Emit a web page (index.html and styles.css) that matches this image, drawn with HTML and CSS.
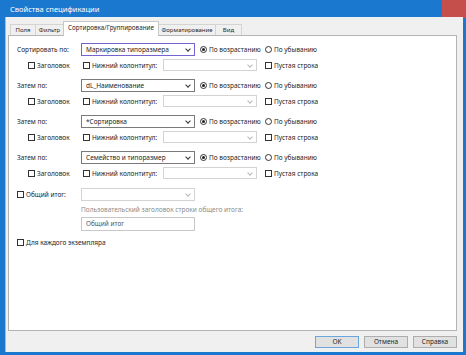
FILE: index.html
```html
<!DOCTYPE html>
<html lang="ru">
<head>
  <meta charset="UTF-8" />
  <title>Свойства спецификации</title>
  <link rel="stylesheet" href="styles.css">
</head>
<body>
  <div class="window">
    <div class="titlebar">
      <span class="title">Свойства спецификации</span>
      <span class="close"></span>
    </div>

    <div class="dialog">
      <div class="tabs">
        <div class="tab t-fields">Поля</div>
        <div class="tab t-filter">Фильтр</div>
        <div class="tab t-sort active">Сортировка/Группирование</div>
        <div class="tab t-format">Форматирование</div>
        <div class="tab t-view">Вид</div>
      </div>

      <div class="panel">
        <!-- уровень 1 -->
        <div class="group">
          <div class="row-main">
            <span class="label">Сортировать по:</span>
            <span class="combo focused">Маркировка типоразмера<i class="chev"></i></span>
            <span class="radio-item"><i class="radio on"></i>По возрастанию</span>
            <span class="radio-item"><i class="radio"></i>По убыванию</span>
          </div>
          <div class="row-sub">
            <span class="check-item head"><i class="check"></i>Заголовок</span>
            <span class="check-item foot"><i class="check"></i>Нижний колонтитул:</span>
            <span class="combo small disabled"><i class="chev"></i></span>
            <span class="check-item"><i class="check"></i>Пустая строка</span>
          </div>
        </div>

        <!-- уровень 2 -->
        <div class="group">
          <div class="row-main">
            <span class="label">Затем по:</span>
            <span class="combo">dL_Наименование<i class="chev"></i></span>
            <span class="radio-item"><i class="radio on"></i>По возрастанию</span>
            <span class="radio-item"><i class="radio"></i>По убыванию</span>
          </div>
          <div class="row-sub">
            <span class="check-item head"><i class="check"></i>Заголовок</span>
            <span class="check-item foot"><i class="check"></i>Нижний колонтитул:</span>
            <span class="combo small disabled"><i class="chev"></i></span>
            <span class="check-item"><i class="check"></i>Пустая строка</span>
          </div>
        </div>

        <!-- уровень 3 -->
        <div class="group">
          <div class="row-main">
            <span class="label">Затем по:</span>
            <span class="combo">*Сортировка<i class="chev"></i></span>
            <span class="radio-item"><i class="radio on"></i>По возрастанию</span>
            <span class="radio-item"><i class="radio"></i>По убыванию</span>
          </div>
          <div class="row-sub">
            <span class="check-item head"><i class="check"></i>Заголовок</span>
            <span class="check-item foot"><i class="check"></i>Нижний колонтитул:</span>
            <span class="combo small disabled"><i class="chev"></i></span>
            <span class="check-item"><i class="check"></i>Пустая строка</span>
          </div>
        </div>

        <!-- уровень 4 -->
        <div class="group">
          <div class="row-main">
            <span class="label">Затем по:</span>
            <span class="combo">Семейство и типоразмер<i class="chev"></i></span>
            <span class="radio-item"><i class="radio on"></i>По возрастанию</span>
            <span class="radio-item"><i class="radio"></i>По убыванию</span>
          </div>
          <div class="row-sub">
            <span class="check-item head"><i class="check"></i>Заголовок</span>
            <span class="check-item foot"><i class="check"></i>Нижний колонтитул:</span>
            <span class="combo small disabled"><i class="chev"></i></span>
            <span class="check-item"><i class="check"></i>Пустая строка</span>
          </div>
        </div>

        <!-- общий итог -->
        <div class="total">
          <div class="row-main">
            <span class="check-item label"><i class="check"></i>Общий итог:</span>
            <span class="combo disabled"><i class="chev"></i></span>
          </div>
          <div class="caption">Пользовательский заголовок строки общего итога:</div>
          <div class="textbox">Общий итог</div>
        </div>

        <div class="each">
          <span class="check-item"><i class="check"></i>Для каждого экземпляра</span>
        </div>
      </div>

      <div class="buttons">
        <span class="btn default">OK</span>
        <span class="btn">Отмена</span>
        <span class="btn">Справка</span>
      </div>
    </div>
  </div>
</body>
</html>
```

FILE: styles.css
```css
* {
  box-sizing: border-box;
  margin: 0;
  padding: 0;
}

body {
  width: 466px;
  height: 355px;
  overflow: hidden;
  font-family: 'Noto Sans', 'DejaVu Sans', sans-serif;
  font-size: 6.5px;
  color: #262626;
}

.window {
  width: 466px;
  height: 355px;
  background: #1b78cf;
  display: flex;
  flex-direction: column;
}

/* заголовок окна */
.titlebar {
  height: 17px;
  display: flex;
  align-items: flex-start;
  color: #fff;
}

.title {
  font-size: 7.5px;
  padding: 4px 0 0 10px;
}

.close {
  margin-left: auto;
  width: 24px;
  height: 18px;
  background: #c5504b;
}

.dialog {
  flex: 1;
  margin: 0 3px 3px 5px;
  background: #f0f0f0;
  border-left: 1px solid #8cc4f0;
  display: flex;
  flex-direction: column;
  padding: 0 6px 0 2px;
}

/* вкладки */
.tabs {
  display: flex;
  align-items: flex-end;
  height: 18px;
  padding-left: 2px;
}

.tab {
  height: 11px;
  line-height: 10px;
  font-size: 6px;
  text-align: center;
  white-space: nowrap;
  background: #f0f0f0;
  border: 1px solid #d4d4d4;
  border-bottom: none;
  margin-right: -1px;
}

.t-fields { width: 26px; }
.t-filter { width: 29px; }
.t-sort { width: 96px; }
.t-format { width: 58px; }
.t-view { width: 27px; }

.tab.active {
  height: 15px;
  line-height: 12px;
  font-size: 6.3px;
  background: #fff;
  border-color: #c8c8c8;
  position: relative;
  z-index: 1;
  margin-bottom: -1px;
}

.panel {
  height: 296px;
  background: #fff;
  border: 1px solid #b4b4b4;
  padding: 7px 0 0 8px;
}

.group {
  margin-bottom: 8px;
}

.row-main {
  display: flex;
  align-items: center;
  height: 13px;
}

.row-sub {
  display: flex;
  align-items: center;
  height: 12px;
  margin-top: 3px;
}

.label {
  width: 64px;
}

.combo {
  position: relative;
  display: flex;
  align-items: center;
  width: 114px;
  height: 13px;
  padding-left: 4px;
  border: 1px solid #7a7a7a;
  background: #fff;
  margin-right: 5px;
}

.combo.focused {
  border: 1.5px solid #7563cf;
}

.combo.small {
  width: 94px;
  height: 12px;
  margin-right: 8px;
}

.combo.disabled {
  border-color: #d3d3d3;
}

.chev {
  position: absolute;
  right: 4px;
  top: 3px;
  width: 4px;
  height: 4px;
  border-right: 1px solid #333;
  border-bottom: 1px solid #333;
  transform: rotate(45deg);
}

.combo.disabled .chev {
  border-color: #b8b8b8;
}

.radio-item,
.check-item {
  display: flex;
  align-items: center;
}

.radio-item {
  width: 65px;
}

.radio {
  width: 7px;
  height: 7px;
  border: 1px solid #333;
  border-radius: 50%;
  margin-right: 2px;
  display: flex;
  align-items: center;
  justify-content: center;
}

.radio.on::after {
  content: "";
  width: 3px;
  height: 3px;
  border-radius: 50%;
  background: #1e1e1e;
}

.check {
  width: 7px;
  height: 7px;
  border: 1px solid #333;
  margin-right: 2px;
  background: #fff;
}

.check-item.head {
  margin-left: 11px;
  width: 55px;
}

.check-item.foot {
  width: 80px;
}

.total {
  margin-top: 9px;
}

.total .label {
  width: 64px;
}

.caption {
  margin: 5px 0 0 64px;
  height: 8px;
  line-height: 8px;
  color: #8c8c8c;
}

.textbox {
  margin: 3px 0 0 64px;
  width: 114px;
  height: 14px;
  line-height: 12px;
  padding-left: 4px;
  border: 1px solid #c8c8c8;
  color: #555;
}

.each {
  margin-top: 7px;
}

/* кнопки */
.buttons {
  display: flex;
  justify-content: flex-end;
  gap: 5px;
  padding-top: 5px;
}

.btn {
  height: 12px;
  width: 44px;
  line-height: 10px;
  text-align: center;
  background: #e1e1e1;
  border: 1px solid #adadad;
}

.btn.default {
  border-color: #6aa6dc;
}
```
